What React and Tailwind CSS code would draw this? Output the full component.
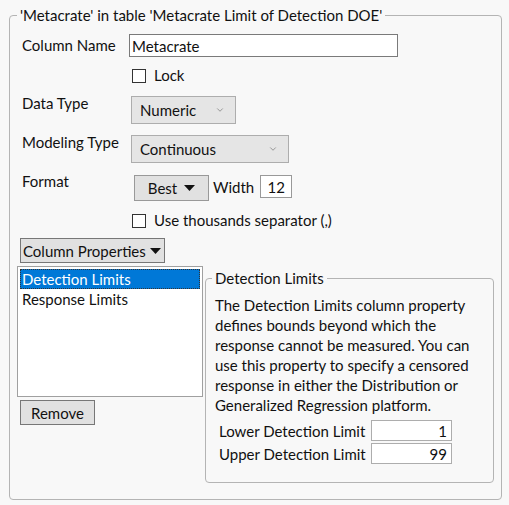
import { ChevronDown } from 'lucide-react';

function Tri() {
  return (
    <svg width="11" height="6" viewBox="0 0 11 6" className="shrink-0">
      <path d="M0 0 H11 L5.5 6 Z" fill="#111" />
    </svg>
  );
}

function Check({ label }) {
  return (
    <div className="flex items-center h-[20px] pl-[110px]">
      <span className="w-[14px] h-[14px] border border-[#333] bg-white" />
      <span className="ml-[8px] -mt-[2px]">{label}</span>
    </div>
  );
}

function Select({ value, width }) {
  return (
    <div className={`${width} h-[28px] border border-[#adadad] bg-[#e5e5e5] flex items-center justify-between pl-[8px] pr-[10px]`}>
      <span>{value}</span>
      <ChevronDown size={10} strokeWidth={1.5} color="#666" />
    </div>
  );
}

export default function App() {
  const para = [
    'The Detection Limits column property',
    'defines bounds beyond which the',
    'response cannot be measured. You can',
    'use this property to specify a censored',
    'response in either the Distribution or',
    'Generalized Regression platform.',
  ];

  return (
    <div className="w-[509px] h-[505px] bg-[#f8f8f8] pt-[6px] pl-[9px] text-[15px] leading-[18px] text-[#111] font-['Lato',sans-serif]">
      <fieldset className="w-[493px] h-[494px] border border-[#b4b4b4] rounded-[4px]">
        <legend className="ml-[7px] px-[3px] whitespace-nowrap">'Metacrate' in table 'Metacrate Limit of Detection DOE'</legend>

        <div className="pl-[12px] pt-[10px]">
          <div className="flex items-center h-[23px]">
            <span className="w-[107px] -mt-[2px]">Column Name</span>
            <div className="w-[269px] h-[23px] border border-[#7a7a7a] bg-white pl-[2px] flex items-center">Metacrate</div>
          </div>

          <div className="mt-[9px]">
            <Check label="Lock" />
          </div>

          <div className="flex items-start mt-[10px]">
            <span className="w-[109px] -mt-[2px]">Data Type</span>
            <Select value="Numeric" width="w-[105px]" />
          </div>

          <div className="flex items-start mt-[11px]">
            <span className="w-[109px] -mt-[2px]">Modeling Type</span>
            <Select value="Continuous" width="w-[158px]" />
          </div>

          <div className="flex items-start mt-[12px]">
            <span className="w-[112px] -mt-[3px]">Format</span>
            <div className="w-[75px] h-[26px] border border-[#999] bg-[#e1e1e1] flex items-center justify-center gap-[7px]">
              <span>Best</span>
              <Tri />
            </div>
            <span className="ml-[4px] mt-[3px]">Width</span>
            <div className="ml-[6px] mt-[1px] w-[32px] h-[23px] border border-[#999] bg-white flex items-center justify-center -translate-y-[1px]">12</div>
          </div>

          <div className="mt-[10px]">
            <Check label="Use thousands separator (,)" />
          </div>
        </div>

        <div className="pl-[10px] mt-[7px]">
          <div className="w-[145px] h-[25px] border border-[#777] bg-[#e1e1e1] flex items-center justify-between pl-[2px] pr-[3px] whitespace-nowrap">
            <span>Column Properties</span>
            <Tri />
          </div>
        </div>

        <div className="flex items-start pl-[7px] mt-[3px]">
          <div className="flex flex-col">
            <div className="w-[186px] h-[131px] border border-[#a0a0a0] bg-white p-[2px]">
              <div className="h-[20px] bg-[#0078d7] text-white pl-[2px] flex items-center outline outline-1 outline-dotted outline-[#333] -outline-offset-1">Detection Limits</div>
              <div className="h-[20px] pl-[2px] flex items-center">Response Limits</div>
            </div>
            <div className="ml-[3px] mt-[3px] w-[75px] h-[25px] border border-[#777] bg-[#e1e1e1] flex items-center justify-center">Remove</div>
          </div>

          <fieldset className="ml-[2px] mt-[3px] w-[289px] h-[214px] border border-[#b4b4b4] rounded-[4px]">
            <legend className="ml-[6px] px-[3px] whitespace-nowrap">Detection Limits</legend>
            <div className="pl-[9px] pt-[8px] leading-[20px]">
              {para.map((l) => (
                <div key={l} className="whitespace-nowrap">{l}</div>
              ))}
            </div>
            <div className="pl-[13px] mt-[5px] flex flex-col gap-[2px]">
              <div className="flex items-center h-[21px]">
                <span className="w-[152px] whitespace-nowrap">Lower Detection Limit</span>
                <div className="w-[81px] h-[21px] border border-[#adadad] bg-white flex items-center justify-end pr-[4px]">1</div>
              </div>
              <div className="flex items-center h-[21px]">
                <span className="w-[152px] whitespace-nowrap">Upper Detection Limit</span>
                <div className="w-[81px] h-[21px] border border-[#adadad] bg-white flex items-center justify-end pr-[4px]">99</div>
              </div>
            </div>
          </fieldset>
        </div>
      </fieldset>
    </div>
  );
}
